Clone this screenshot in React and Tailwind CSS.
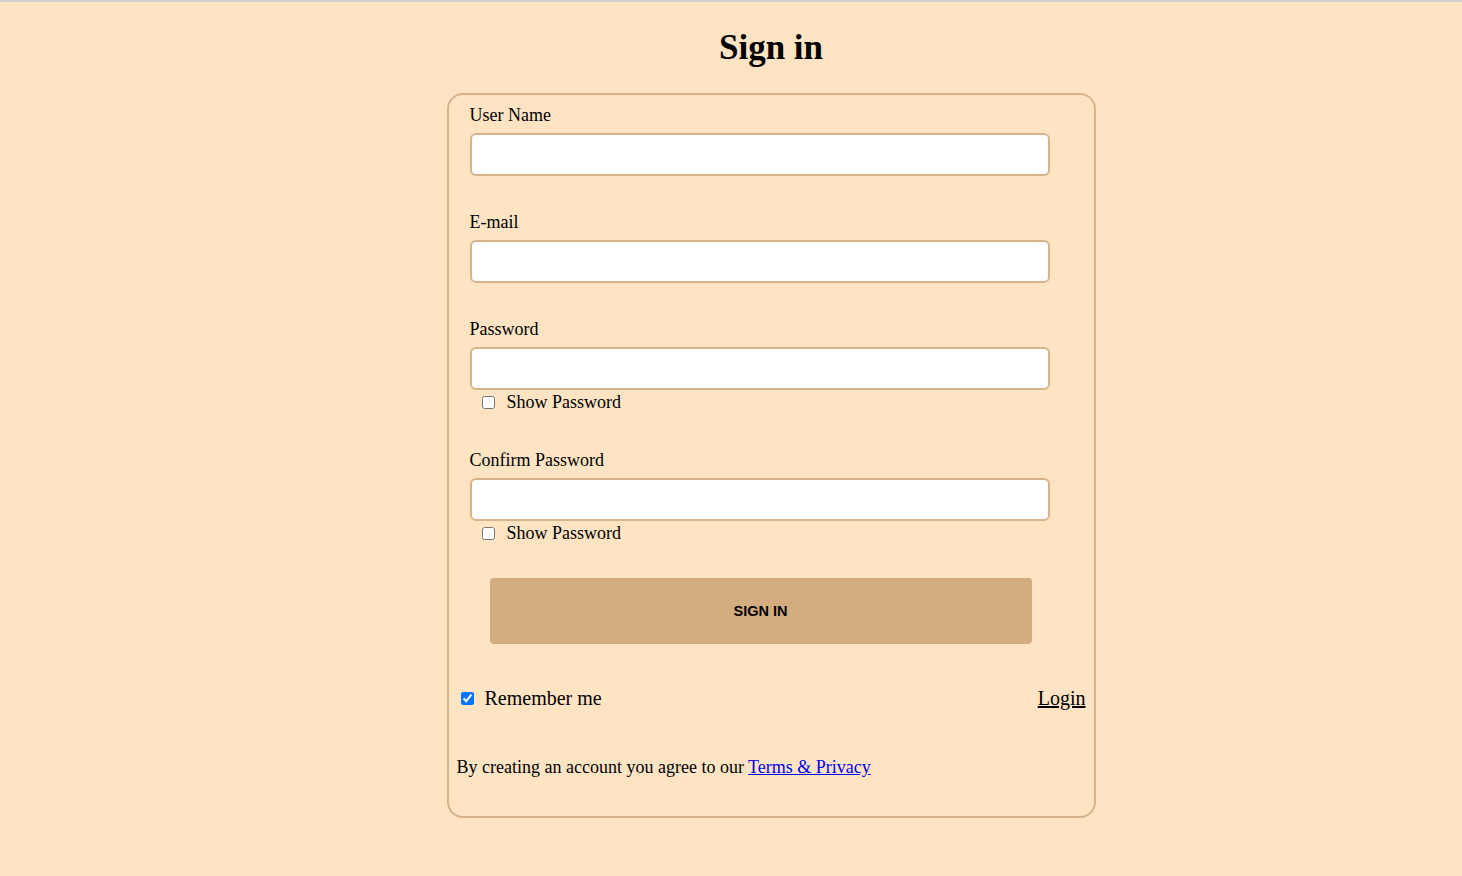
import { useState } from "react";

const serif = { fontFamily: '"Liberation Serif", "Times New Roman", serif' };

function Field({ label, type = "text", top = "mt-[36px]", toggle, show, onToggle }) {
  return (
    <div>
      <label className={`block text-[18px] leading-[21px] text-black ${top}`}>{label}</label>
      <input
        type={toggle && show ? "text" : type}
        className="mt-[7px] block h-[43px] w-[580px] rounded-[6px] border-2 border-[#d6b38b] bg-white px-3 text-[16px] outline-none"
      />
      {toggle && (
        <div className="mt-[2px] flex h-[21px] items-center pl-[12px]">
          <input
            type="checkbox"
            checked={show}
            onChange={onToggle}
            className="m-0 h-[13px] w-[13px]"
          />
          <span className="ml-[12px] text-[18px] leading-[21px]">Show Password</span>
        </div>
      )}
    </div>
  );
}

export default function App() {
  const [showPass, setShowPass] = useState(false);
  const [showConfirm, setShowConfirm] = useState(false);
  const [remember, setRemember] = useState(true);

  return (
    <div className="min-h-screen border-t-2 border-[#cfcfcf] bg-[#ffe4c4] text-black" style={serif}>
      <div className="flex flex-col items-center pl-[80px]">
        {/* title */}
        <h1 className="mt-[26px] text-[35px] font-bold leading-[40px]">Sign in</h1>

        {/* card */}
        <form
          className="mt-[25px] w-[649px] rounded-[16px] border-2 border-[#d6b38b]"
          onSubmit={(e) => e.preventDefault()}
        >
          <div className="pl-[21px]">
            <Field label="User Name" top="mt-[10px]" />
            <Field label="E-mail" type="email" top="mt-[36px]" />
            <Field
              label="Password"
              type="password"
              top="mt-[36px]"
              toggle
              show={showPass}
              onToggle={() => setShowPass(!showPass)}
            />
            <Field
              label="Confirm Password"
              type="password"
              top="mt-[37px]"
              toggle
              show={showConfirm}
              onToggle={() => setShowConfirm(!showConfirm)}
            />

            <button
              type="submit"
              className="ml-[20px] mt-[34px] block h-[66px] w-[542px] rounded-[4px] bg-[#d3ad80] pt-[2px] text-[14.5px] font-bold text-black"
              style={{ fontFamily: '"Liberation Sans", Arial, sans-serif' }}
            >
              SIGN IN
            </button>
          </div>

          {/* remember / login */}
          <div className="mt-[43px] flex items-center justify-between pl-[12px] pr-[8px]">
            <label className="flex items-center text-[20px] leading-[23px]">
              <input
                type="checkbox"
                checked={remember}
                onChange={() => setRemember(!remember)}
                className="m-0 h-[13px] w-[13px]"
              />
              <span className="ml-[11px]">Remember me</span>
            </label>
            <a href="#" className="text-[20px] leading-[23px] text-black underline">
              Login
            </a>
          </div>

          <p className="mt-[47px] pb-[38px] pl-[8px] text-[18px] leading-[21px]">
            By creating an account you agree to our{" "}
            <a href="#" className="text-[#0000ee] underline">
              Terms &amp; Privacy
            </a>
          </p>
        </form>
      </div>
    </div>
  );
}
